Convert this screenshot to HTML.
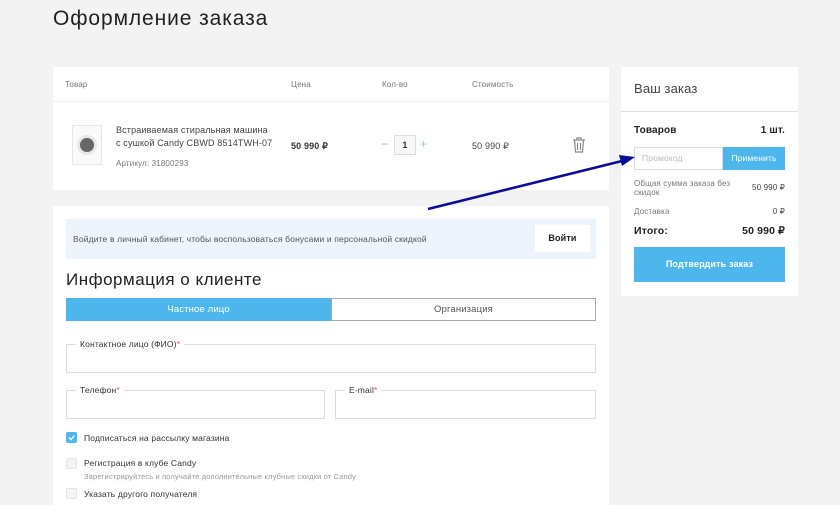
<!DOCTYPE html><html><head><meta charset="utf-8"><style>
*{margin:0;padding:0;box-sizing:border-box}
body{width:840px;height:505px;overflow:hidden;background:#f3f3f3;font-family:"Liberation Sans",sans-serif;color:#333;position:relative;letter-spacing:0.15px}
.a{position:absolute}
.card{position:absolute;background:#fff}
.s{font-size:9px;color:#777}
.inp{position:absolute;border:1px solid #ddd;background:#fff}
.lbl{position:absolute;top:-6px;left:9px;background:#fff;padding:0 4px;font-size:8.5px;color:#333}
.lbl i{color:#e44;font-style:normal}
.cb{position:absolute;width:11px;height:11px;border:1px solid #e3e3e3;background:#f4f4f4;border-radius:2px}
</style></head><body>
<div class="a" style="left:53px;top:7px;font-size:21px;letter-spacing:0.9px;color:#222">Оформление заказа</div>

<div class="card" style="left:53px;top:67px;width:556px;height:123px">
 <div class="a s" style="left:12px;top:13px;font-size:8px">Товар</div>
 <div class="a s" style="left:238px;top:13px;font-size:8px">Цена</div>
 <div class="a s" style="left:329px;top:13px;font-size:8px">Кол-во</div>
 <div class="a s" style="left:419px;top:13px;font-size:8px">Стоимость</div>
 <div class="a" style="left:0;top:34px;width:556px;height:1px;background:#eee"></div>
 <div class="a" style="left:19px;top:58px;width:30px;height:40px;background:#fafafa;border:1px solid #e6e6e6">
  <div class="a" style="left:4px;top:9px;width:20px;height:20px;border-radius:50%;background:#666;border:3px solid #e8e8e8"></div></div>
 <div class="a" style="left:63px;top:57px;font-size:9px;line-height:13px;color:#444">Встраиваемая стиральная машина<br>с сушкой Candy CBWD 8514TWH-07</div>
 <div class="a s" style="left:63px;top:92px;font-size:8px">Артикул: 31800293</div>
 <div class="a" style="left:238px;top:74px;font-size:9px;font-weight:bold;color:#333">50 990 ₽</div>
 <div class="a" style="left:328px;top:70px;font-size:12px;color:#aac">−</div>
 <div class="a" style="left:341px;top:68px;width:22px;height:20px;border:1px solid #ddd;background:#f7f7f7;font-size:9px;font-weight:bold;text-align:center;line-height:18px">1</div>
 <div class="a" style="left:367px;top:70px;font-size:12px;color:#9cd">+</div>
 <div class="a" style="left:419px;top:74px;font-size:9px;color:#444">50 990 ₽</div>
 <svg class="a" style="left:519px;top:70px" width="14" height="16" viewBox="0 0 14 16"><path d="M1 3h12M5 3V1h4v2M2.5 3l1 12h7l1-12M5.5 6v7M8.5 6v7" fill="none" stroke="#888" stroke-width="1.2"/></svg>
</div>

<div class="card" style="left:53px;top:206px;width:556px;height:299px">
 <div class="a" style="left:13px;top:13px;width:530px;height:40px;background:#eef4fb">
  <div class="a" style="left:7px;top:15px;font-size:8.5px;color:#555">Войдите в личный кабинет, чтобы воспользоваться бонусами и персональной скидкой</div>
  <div class="a" style="left:469px;top:6px;width:55px;height:27px;background:#fff;font-size:9px;font-weight:bold;text-align:center;line-height:27px;color:#222">Войти</div>
 </div>
 <div class="a" style="left:13px;top:64px;font-size:17px;letter-spacing:0.5px;color:#222">Информация о клиенте</div>
 <div class="a" style="left:13px;top:92px;width:265px;height:23px;background:#4db6ec;color:#fff;font-size:9.5px;text-align:center;line-height:23px">Частное лицо</div>
 <div class="a" style="left:278px;top:92px;width:265px;height:23px;border:1px solid #aaa;color:#555;font-size:9.5px;text-align:center;line-height:21px">Организация</div>
 <div class="inp" style="left:13px;top:138px;width:530px;height:29px"><span class="lbl">Контактное лицо (ФИО)<i>*</i></span></div>
 <div class="inp" style="left:13px;top:184px;width:259px;height:29px"><span class="lbl">Телефон<i>*</i></span></div>
 <div class="inp" style="left:282px;top:184px;width:261px;height:29px"><span class="lbl">E-mail<i>*</i></span></div>
 <div class="cb" style="left:13px;top:226px;background:#4db6ec;border-color:#4db6ec"><svg width="9" height="9" viewBox="0 0 9 9" style="position:absolute;left:0;top:0"><path d="M2 4.5l2 2 3.5-4" fill="none" stroke="#fff" stroke-width="1.3"/></svg></div>
 <div class="a" style="left:31px;top:227px;font-size:8.5px;color:#333">Подписаться на рассылку магазина</div>
 <div class="cb" style="left:13px;top:252px"></div>
 <div class="a" style="left:31px;top:252px;font-size:8.5px;color:#333">Регистрация в клубе Candy</div>
 <div class="a" style="left:31px;top:266px;font-size:7.5px;color:#999">Зарегистрируйтесь и получайте дополнительные клубные скидки от Candy</div>
 <div class="cb" style="left:13px;top:282px"></div>
 <div class="a" style="left:31px;top:283px;font-size:8.5px;color:#333">Указать другого получателя</div>
</div>

<div class="card" style="left:621px;top:67px;width:177px;height:229px">
 <div class="a" style="left:13px;top:14px;font-size:13px;color:#444">Ваш заказ</div>
 <div class="a" style="left:0;top:44px;width:177px;height:1px;background:#ddd"></div>
 <div class="a" style="left:13px;top:58px;font-size:10px;font-weight:bold;color:#222">Товаров</div>
 <div class="a" style="right:13px;top:58px;font-size:10px;font-weight:bold;color:#222">1 шт.</div>
 <div class="a" style="left:13px;top:80px;width:89px;height:23px;border:1px solid #ddd;font-size:8.5px;color:#bbb;line-height:21px;padding-left:7px">Промокод</div>
 <div class="a" style="left:102px;top:80px;width:62px;height:23px;background:#4db6ec;color:#fff;font-size:8.5px;text-align:center;line-height:23px">Применить</div>
 <div class="a s" style="left:13px;top:112px;font-size:8px;line-height:9px">Общая сумма заказа без<br>скидок</div>
 <div class="a" style="right:13px;top:116px;font-size:8px;color:#444">50 990 ₽</div>
 <div class="a s" style="left:13px;top:140px;font-size:8px">Доставка</div>
 <div class="a" style="right:13px;top:140px;font-size:8px;color:#444">0 ₽</div>
 <div class="a" style="left:13px;top:158px;font-size:10.5px;font-weight:bold;color:#222">Итого:</div>
 <div class="a" style="right:13px;top:158px;font-size:10.5px;font-weight:bold;color:#222">50 990 ₽</div>
 <div class="a" style="left:13px;top:180px;width:151px;height:35px;background:#4db6ec;color:#fff;font-size:9px;font-weight:bold;text-align:center;line-height:35px">Подтвердить заказ</div>
</div>

<svg class="a" style="left:0;top:0" width="840" height="505"><path d="M428 209L622 161" stroke="#0b0b9a" stroke-width="2.5"/><path d="M635 157L619 155L622 166Z" fill="#0b0b9a"/></svg>
</body></html>
